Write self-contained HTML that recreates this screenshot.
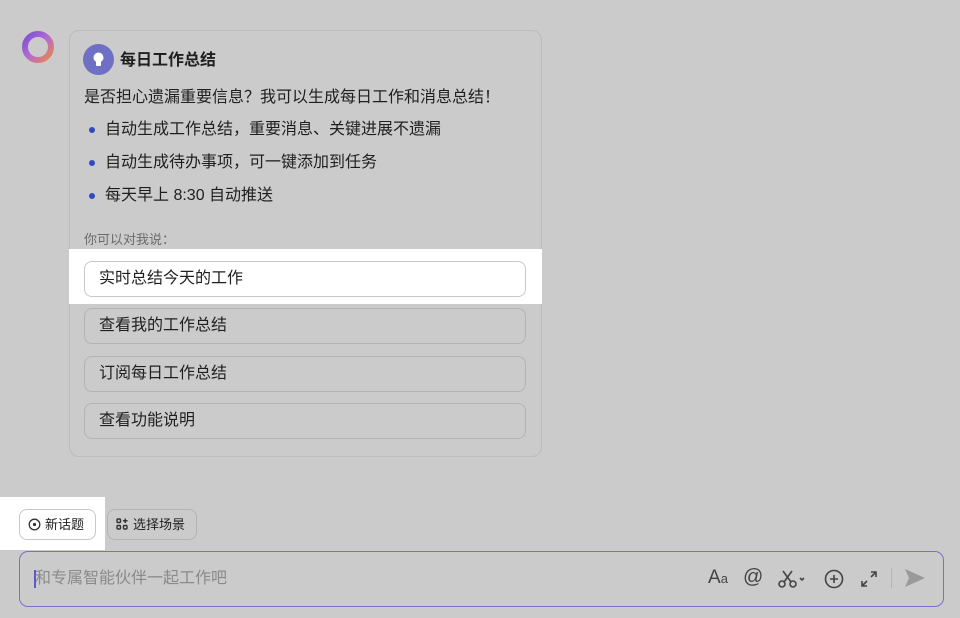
<!DOCTYPE html>
<html><head><meta charset="utf-8"><style>
*{box-sizing:border-box;margin:0;padding:0}
body{width:960px;height:618px;background:#cbcbcb;font-family:"Liberation Sans","Noto Sans CJK SC",sans-serif;color:#1f1f1f;position:relative;overflow:hidden}
.abs{position:absolute}
.card{left:69px;top:30px;width:473px;height:427px;border:1px solid #bcbcbc;border-radius:10px;background:#cbcbcb}
.t{position:absolute;font-size:16px;white-space:nowrap;line-height:20px}
.dot{position:absolute;width:6px;height:6px;border-radius:50%;background:#2f4ac0}
.btn{position:absolute;left:84px;width:442px;height:36px;border:1px solid #b3b3b3;border-radius:8px;font-size:16px;line-height:34px;padding-left:14px;background:#cbcbcb}
.hl{background:#fff}
</style></head><body>
<svg class="abs" style="left:20px;top:29px" width="36" height="36" viewBox="0 0 36 36"><defs><linearGradient id="g" x1="0" y1="0" x2="1" y2="1"><stop offset="0" stop-color="#7b4fd6"/><stop offset=".5" stop-color="#b56ad0"/><stop offset="1" stop-color="#e8884a"/></linearGradient></defs><circle cx="18" cy="18" r="13" fill="none" stroke="url(#g)" stroke-width="6"/></svg>
<div class="abs card"></div>
<div class="abs hl" style="left:69px;top:249px;width:473px;height:55px"></div>
<div class="abs hl" style="left:0;top:497px;width:105px;height:53px"></div>
<svg class="abs" style="left:83px;top:44px" width="31" height="31" viewBox="0 0 31 31"><circle cx="15.5" cy="15.5" r="15.5" fill="#6f6fc6"/><circle cx="15.5" cy="13.5" r="5" fill="#fff"/><rect x="13" y="17" width="5" height="5" rx="1" fill="#fff"/></svg>
<div class="t" style="left:120px;top:51px;font-weight:bold">每日工作总结</div>
<div class="t" style="left:84px;top:88px">是否担心遗漏重要信息？我可以生成每日工作和消息总结！</div>
<div class="dot" style="left:89px;top:127px"></div><div class="t" style="left:105px;top:120px">自动生成工作总结，重要消息、关键进展不遗漏</div>
<div class="dot" style="left:89px;top:160px"></div><div class="t" style="left:105px;top:153px">自动生成待办事项，可一键添加到任务</div>
<div class="dot" style="left:89px;top:193px"></div><div class="t" style="left:105px;top:186px">每天早上 8:30 自动推送</div>
<div class="t" style="left:84px;top:230px;font-size:13px;color:#6a6a6a">你可以对我说：</div>
<div class="btn" style="top:261px;background:#fff;border-color:#c8c8c8">实时总结今天的工作</div>
<div class="btn" style="top:308px">查看我的工作总结</div>
<div class="btn" style="top:356px">订阅每日工作总结</div>
<div class="btn" style="top:403px">查看功能说明</div>
<div class="abs" style="left:19px;top:509px;width:77px;height:31px;border:1px solid #c8c8c8;border-radius:8px;background:#fff;font-size:13px;line-height:29px;padding-left:25px">新话题</div>
<svg class="abs" style="left:28px;top:518px" width="13" height="13" viewBox="0 0 13 13"><circle cx="6.5" cy="6.5" r="5.3" fill="none" stroke="#333" stroke-width="1.3"/><circle cx="6.5" cy="6.5" r="1.6" fill="#333"/></svg>
<div class="abs" style="left:107px;top:509px;width:90px;height:31px;border:1px solid #b3b3b3;border-radius:8px;font-size:13px;line-height:29px;padding-left:25px">选择场景</div>
<svg class="abs" style="left:116px;top:518px" width="12" height="12" viewBox="0 0 12 12" fill="none" stroke="#333" stroke-width="1.4"><rect x="1" y="1" width="3.5" height="3.5" rx="1"/><rect x="1" y="7.5" width="3.5" height="3.5" rx="1"/><rect x="7.5" y="7.5" width="3.5" height="3.5" rx="1"/><path d="M9.25 0.5v4.5M7 2.75h4.5"/></svg>
<div class="abs" style="left:19px;top:551px;width:925px;height:56px;border:1.5px solid #7a6fd0;border-radius:9px"></div>
<div class="abs" style="left:34px;top:570px;width:2px;height:18px;background:#5a5ad0"></div>
<div class="t" style="left:35px;top:569px;color:#8a8a8a">和专属智能伙伴一起工作吧</div>
<div class="t" style="left:708px;top:568px;font-size:19px;color:#444">A<span style="font-size:13px">a</span></div>
<div class="t" style="left:743px;top:567px;font-size:20px;color:#444">@</div>
<svg class="abs" style="left:778px;top:569px" width="32" height="20" viewBox="0 0 32 20" fill="none" stroke="#444" stroke-width="1.6"><circle cx="4" cy="15" r="3"/><circle cx="15" cy="15" r="3"/><path d="M6 13L14 2M13 13L5 2"/><path d="M22 9l2 2 2-2"/></svg>
<svg class="abs" style="left:824px;top:569px" width="20" height="20" viewBox="0 0 20 20" fill="none" stroke="#444" stroke-width="1.6"><circle cx="10" cy="10" r="8.5"/><path d="M10 6v8M6 10h8"/></svg>
<svg class="abs" style="left:860px;top:570px" width="18" height="18" viewBox="0 0 18 18" fill="none" stroke="#444" stroke-width="1.6"><path d="M11 2h5v5M16 2l-5 5M7 16H2v-5M2 16l5-5"/></svg>
<div class="abs" style="left:891px;top:568px;width:1px;height:20px;background:#b5b5b5"></div>
<svg class="abs" style="left:904px;top:568px" width="22" height="20" viewBox="0 0 22 20"><path d="M1 1L21 10L1 19L5 10Z" fill="#9a9a9a"/></svg>
</body></html>
